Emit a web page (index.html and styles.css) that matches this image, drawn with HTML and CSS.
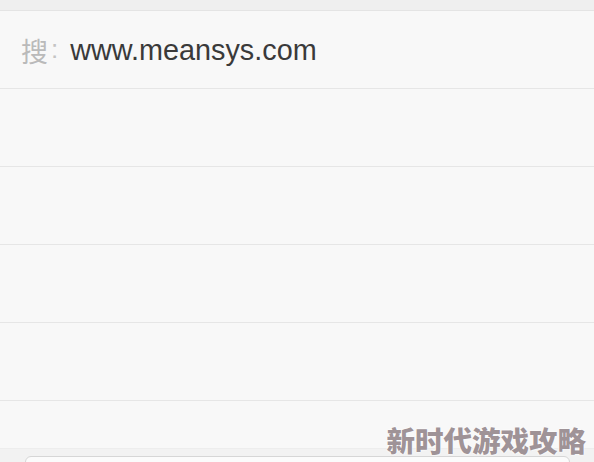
FILE: index.html
```html
<!DOCTYPE html>
<html lang="zh">
<head>
<meta charset="utf-8">
<link rel="stylesheet" href="styles.css">
</head>
<body>
<div class="page">
  <div class="topstrip"></div>
  <div class="row search">
    <span class="label">搜</span><span class="colon">:</span>
    <span class="url">www.meansys.com</span>
  </div>
  <div class="row"></div>
  <div class="row"></div>
  <div class="row"></div>
  <div class="row"></div>
  <div class="row short"></div>
  <div class="footer">
    <div class="box"></div>
  </div>
  <div class="watermark">新时代游戏攻略</div>
</div>
</body>
</html>
```
FILE: styles.css
```css
html, body {
  margin: 0;
  padding: 0;
  background: #f8f8f8;
}
.page {
  position: relative;
  width: 594px;
  height: 462px;
  overflow: hidden;
  background: #f8f8f8;
  font-family: "Liberation Sans", Arial, "Noto Sans CJK SC", sans-serif;
}
.topstrip {
  height: 10px;
  background: #efefef;
  border-bottom: 1px solid #e4e4e4;
}
.row {
  height: 77px;
  border-bottom: 1px solid #e6e6e6;
  box-sizing: content-box;
}
.row.short {
  height: 47px;
  border-bottom: 1px solid #ededed;
}
.search {
  display: flex;
  align-items: center;
  padding-left: 21px;
}
.label {
  font-family: "Noto Sans CJK SC", sans-serif;
  font-size: 27px;
  color: #bababa;
  margin-top: 1px;
}
.colon {
  font-size: 26px;
  color: #c4c4c4;
  margin-left: 3px;
  margin-right: 12px;
}
.url {
  font-size: 28.8px;
  color: #3a3a3a;
  margin-top: 1px;
}
.footer {
  height: 20px;
  background: #f2f2f2;
  padding-top: 7px;
  padding-left: 25px;
  padding-right: 24px;
}
.box {
  height: 20px;
  background: #fbfbfb;
  border: 1px solid #d6d6d6;
  border-radius: 6px 6px 0 0;
}
.watermark {
  position: absolute;
  right: 8px;
  top: 422px;
  font-family: "Noto Sans CJK SC", sans-serif;
  font-weight: 900;
  font-size: 28.5px;
  line-height: 36px;
  color: #9f9397;
  text-shadow: 0 0 2px #ffffff, 0 0 2px #ffffff;
}
```
